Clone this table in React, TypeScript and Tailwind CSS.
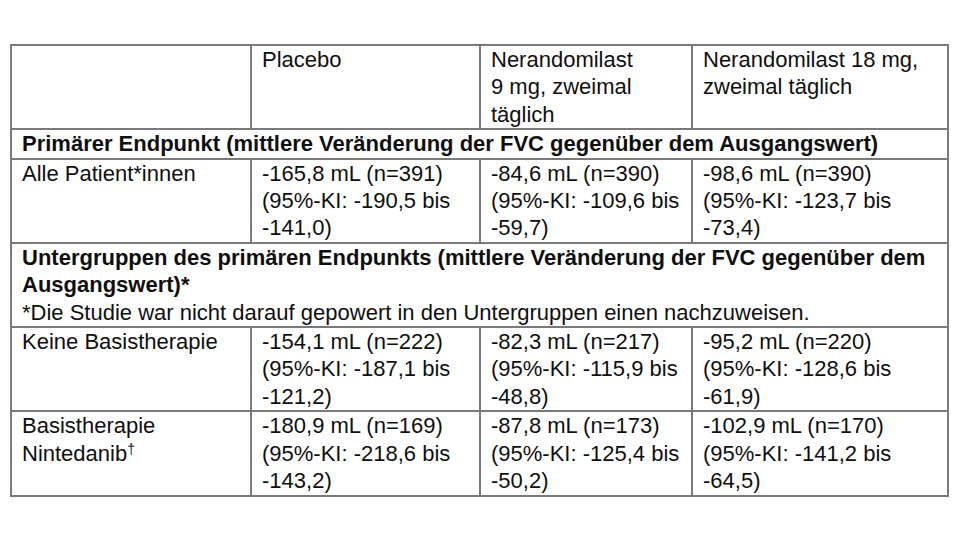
const FONT = "font-['Liberation_Sans','Arial',sans-serif]"

type Row = {
  label: React.ReactNode[]
  values: string[][]
}

const primaryRows: Row[] = [
  {
    label: ["Alle Patient*innen"],
    values: [
      ["-165,8 mL (n=391)", "(95%-KI: -190,5 bis", "-141,0)"],
      ["-84,6 mL (n=390)", "(95%-KI: -109,6 bis", "-59,7)"],
      ["-98,6 mL (n=390)", "(95%-KI: -123,7 bis", "-73,4)"],
    ],
  },
]

const subgroupRows: Row[] = [
  {
    label: ["Keine Basistherapie"],
    values: [
      ["-154,1 mL (n=222)", "(95%-KI: -187,1 bis", "-121,2)"],
      ["-82,3 mL (n=217)", "(95%-KI: -115,9 bis", "-48,8)"],
      ["-95,2 mL (n=220)", "(95%-KI: -128,6 bis", "-61,9)"],
    ],
  },
  {
    label: [
      "Basistherapie",
      <>
        Nintedanib<sup className="top-[-0.45em] text-[14px]">†</sup>
      </>,
    ],
    values: [
      ["-180,9 mL (n=169)", "(95%-KI: -218,6 bis", "-143,2)"],
      ["-87,8 mL (n=173)", "(95%-KI: -125,4 bis", "-50,2)"],
      ["-102,9 mL (n=170)", "(95%-KI: -141,2 bis", "-64,5)"],
    ],
  },
]

const cell = "border-2 border-[#7a7a7a] pl-[10px] pr-2 py-0 align-top"

function Lines({ lines }: { lines: React.ReactNode[] }) {
  return (
    <>
      {lines.map((line, i) => (
        <div key={i} className="whitespace-nowrap">
          {line}
        </div>
      ))}
    </>
  )
}

function DataRow({ row }: { row: Row }) {
  return (
    <tr>
      <td className={cell}>
        <Lines lines={row.label} />
      </td>
      {row.values.map((v, i) => (
        <td key={i} className={cell}>
          <Lines lines={v} />
        </td>
      ))}
    </tr>
  )
}

export default function App() {
  return (
    <div className={`h-[540px] w-[960px] bg-white pt-[44px] pl-[10px] ${FONT}`}>
      <table className="w-[937px] table-fixed border-collapse text-[22px] leading-[27.4px] text-[#0f0f0f]">
        <colgroup>
          <col className="w-[240px]" />
          <col className="w-[229px]" />
          <col className="w-[212px]" />
          <col className="w-[256px]" />
        </colgroup>
        <tbody>
          <tr>
            <td className={cell}>
              <div className="h-[82px]" />
            </td>
            <td className={cell}>
              <Lines lines={["Placebo"]} />
            </td>
            <td className={cell}>
              <Lines lines={["Nerandomilast", "9 mg, zweimal", "täglich"]} />
            </td>
            <td className={cell}>
              <Lines lines={["Nerandomilast 18 mg,", "zweimal täglich"]} />
            </td>
          </tr>
          <tr>
            <td colSpan={4} className={`${cell} font-bold`}>
              Primärer Endpunkt (mittlere Veränderung der FVC gegenüber dem Ausgangswert)
            </td>
          </tr>
          {primaryRows.map((row, i) => (
            <DataRow key={i} row={row} />
          ))}
          <tr>
            <td colSpan={4} className={cell}>
              <div className="font-bold">
                <div className="whitespace-nowrap">
                  Untergruppen des primären Endpunkts (mittlere Veränderung der FVC gegenüber dem
                </div>
                <div>Ausgangswert)*</div>
              </div>
              <div className="whitespace-nowrap">
                *Die Studie war nicht darauf gepowert in den Untergruppen einen nachzuweisen.
              </div>
            </td>
          </tr>
          {subgroupRows.map((row, i) => (
            <DataRow key={i} row={row} />
          ))}
        </tbody>
      </table>
    </div>
  )
}
